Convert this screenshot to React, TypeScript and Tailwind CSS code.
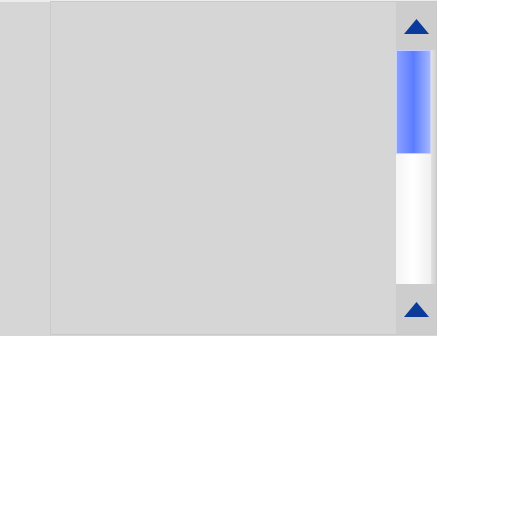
import React from "react";

const Arrow = () => (
  <svg width="25" height="15" viewBox="0 0 25 15">
    <polygon points="12.5,0 25,15 0,15" fill="#0b3a9b" />
  </svg>
);

const App = () => {
  return (
    <div className="w-[437px] h-[336px] bg-[#d6d6d6] border-t-2 border-[#ececec] flex">
      <div className="w-[50px] shrink-0" />
      <div className="flex-1 -mt-[1px] mb-[1px] border border-[#cacaca] bg-[#d6d6d6] flex">
        <div className="flex-1" />
        <div className="w-[40px] bg-[#cdcdcd] flex flex-col">
          <div className="h-[48px] flex items-center justify-center">
            <Arrow />
          </div>
          <div className="flex-1 flex">
            <div className="w-[35px] flex flex-col">
              <div className="h-[104px] bg-gradient-to-r from-[#8aa0ff] via-[#5c7cff] to-[#a5b6ff] border border-[#c8d0ff]" />
              <div className="flex-1 bg-gradient-to-r from-[#f4f4f4] via-white to-[#f0f0f0]" />
            </div>
            <div className="flex-1 bg-gradient-to-r from-[#e2e2e2] to-[#d0d0d0]" />
          </div>
          <div className="h-[50px] flex items-center justify-center">
            <Arrow />
          </div>
        </div>
      </div>
    </div>
  );
};

export default App;
